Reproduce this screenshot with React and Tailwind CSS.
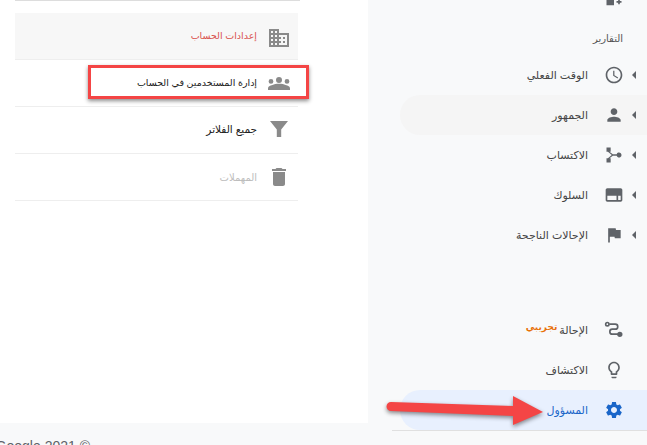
import React from 'react';

const ICONS = {
  domain: 'M12 7V3H2v18h20V7H12zM6 19H4v-2h2v2zm0-4H4v-2h2v2zm0-4H4V9h2v2zm0-4H4V5h2v2zm4 12H8v-2h2v2zm0-4H8v-2h2v2zm0-4H8V9h2v2zm0-4H8V5h2v2zm10 12h-8v-2h2v-2h-2v-2h2v-2h-2V9h8v10zm-2-8h-2v2h2v-2zm0 4h-2v2h2v-2z',
  group: 'M4 8a2.4 2.4 0 1 1 0 4.8A2.4 2.4 0 0 1 4 8zM12 6a3 3 0 1 1 0 6 3 3 0 0 1 0-6zM20 8a2.4 2.4 0 1 1 0 4.8A2.4 2.4 0 0 1 20 8zM1 19v-1.6C1 15.5 2.800 14.400 5.500 14c1.500-.8 3.800-1.300 6.500-1.300s5 .5 6.500 1.300c2.700.4 4.500 1.500 4.500 3.400V19z',
  filter: 'M3 4h18l-6.800 8.500V20H9.800v-7.500z',
  trash: 'M6 19c0 1.1.9 2 2 2h8c1.1 0 2-.9 2-2V7H6v12zM19 4h-3.500l-1-1h-5l-1 1H5v2h14V4z',
  clock: 'M11.990 2C6.470 2 2 6.480 2 12s4.470 10 9.990 10C17.520 22 22 17.520 22 12S17.520 2 11.990 2zM12 20c-4.420 0-8-3.580-8-8s3.580-8 8-8 8 3.580 8 8-3.580 8-8 8zm.5-13H11v6l5.250 3.150.75-1.230-4.500-2.670z',
  person: 'M12 12c2.210 0 4-1.790 4-4s-1.790-4-4-4-4 1.790-4 4 1.790 4 4 4zm0 2c-2.670 0-8 1.340-8 4v2h16v-2c0-2.660-5.330-4-8-4z',
  acquisition: 'M3 3h5v5H6.600l4 3.200A3 3 0 0 1 12 11h3.200a3 3 0 1 1 0 2H12a3 3 0 0 1-1.400-.2l-4 3.200H8v5H3v-5h1.700l4.600-4-4.600-4H3z',
  behavior: 'M20 4H4c-1.100 0-2 .9-2 2v12c0 1.100.9 2 2 2h16c1.100 0 2-.9 2-2V6c0-1.100-.9-2-2-2zM4 18v-5h11v5H4zm16 0h-3v-5h3v5z',
  flag: 'M14.400 6L14 4H5v17h2v-7h5.600l.4 2h7V6z',
  route: 'M4 2a3 3 0 1 1 0 6 3 3 0 0 1 0-6zm0 2a1 1 0 1 0 0 2 1 1 0 0 0 0-2zM7 4h6.500a4 4 0 0 1 0 8H10a2 2 0 0 0 0 4h6v2h-6a4 4 0 0 1 0-8h3.500a2 2 0 0 0 0-4H7zM19 14a3.200 3.200 0 1 1 0 6.400 3.200 3.200 0 0 1 0-6.400z',
  bulb: 'M9 21c0 .55.45 1 1 1h4c.55 0 1-.45 1-1v-1H9v1zm3-19C8.140 2 5 5.140 5 9c0 2.380 1.190 4.470 3 5.740V17c0 .55.45 1 1 1h6c.55 0 1-.45 1-1v-2.260c1.810-1.270 3-3.360 3-5.740 0-3.860-3.140-7-7-7zm2.850 11.100l-.85.6V16h-4v-2.300l-.85-.6C7.800 12.160 7 10.630 7 9c0-2.760 2.240-5 5-5s5 2.240 5 5c0 1.630-.8 3.160-2.150 4.100z',
  gear: 'M19.140 12.940c.04-.3.06-.61.06-.94 0-.32-.02-.64-.07-.94l2.030-1.580c.18-.14.23-.41.12-.61l-1.920-3.320c-.12-.22-.37-.29-.59-.22l-2.390.96c-.5-.38-1.030-.7-1.620-.94l-.36-2.540c-.04-.24-.24-.41-.48-.41h-3.840c-.24 0-.43.17-.47.41l-.36 2.540c-.59.24-1.130.57-1.620.94l-2.390-.96c-.22-.08-.47 0-.59.22L2.740 8.870c-.12.21-.08.47.12.61l2.030 1.580c-.05.3-.09.63-.09.94s.02.64.07.94l-2.030 1.580c-.18.14-.23.41-.12.61l1.920 3.320c.12.22.37.29.59.22l2.390-.96c.5.38 1.030.7 1.620.94l.36 2.540c.05.24.24.41.48.41h3.840c.24 0 .44-.17.47-.41l.36-2.540c.59-.24 1.130-.56 1.620-.94l2.390.96c.22.08.47 0 .59-.22l1.920-3.320c.12-.22.07-.47-.12-.61l-2.010-1.580zM12 15.600c-1.980 0-3.600-1.620-3.600-3.600s1.620-3.600 3.600-3.600 3.600 1.620 3.600 3.600-1.620 3.600-3.600 3.600z',
  addBox: 'M3 3h9v20H3zM17 16h2v2h2v2h-2v2h-2v-2h-2v-2h2z',
};

function Icon({ name, className }) {
  return (
    <svg viewBox="0 0 24 24" className={className} fill="currentColor" aria-hidden="true">
      <path d={ICONS[name]} />
    </svg>
  );
}

const accountRows = [
  { label: 'إعدادات الحساب', icon: 'domain', text: 'text-[9.5px] text-[#d9534f]', bg: 'bg-[#f7f7f7]', iconClass: 'mt-[4px]' },
  { label: 'إدارة المستخدمين في الحساب', icon: 'group', text: 'text-[9.5px] text-[#222222]', bg: '', iconClass: '' },
  { label: 'جميع الفلاتر', icon: 'filter', text: 'text-[10.5px] text-[#222222]', bg: '', iconClass: '-mt-[2px]' },
  { label: 'المهملات', icon: 'trash', text: 'text-[10px] text-[#bdbdbd]', bg: '', iconClass: '' },
];

const reportRows = [
  { label: 'الوقت الفعلي', icon: 'clock' },
  { label: 'الجمهور', icon: 'person', bg: 'bg-[#f5f5f5]' },
  { label: 'الاكتساب', icon: 'acquisition' },
  { label: 'السلوك', icon: 'behavior' },
  { label: 'الإحالات الناجحة', icon: 'flag' },
];

function NavRow({ label, icon, caret = true, bg = '', color = 'text-[#5f6368]', textColor = 'text-[#444444]', children }) {
  return (
    <div className={`ml-[32px] flex h-10 items-center rounded-l-[20px] pr-[11px] ${bg}`}>
      <span className={`h-0 w-0 border-y-[4px] border-r-[4px] border-y-transparent ${caret ? 'border-r-[#5f6368]' : 'border-r-transparent'}`} />
      <Icon name={icon} className={`mr-2 h-5 w-5 ${color}`} />
      <span className={`mr-4 text-[11px] whitespace-nowrap ${textColor}`}>{label}</span>
      {children}
    </div>
  );
}

export default function App() {
  return (
    <div className="relative flex h-[445px] w-[647px] overflow-hidden bg-white font-['Liberation_Sans','DejaVu_Sans',sans-serif]">
      <div className="flex w-[368px] flex-col">
        <main className="h-[423px] w-[298px] pl-[15px]">
          <div className="h-px w-[285px] bg-[#dddddd]" />
          <div className="mt-3">
            {accountRows.map((row) => (
              <div key={row.icon} dir="rtl" className={`flex h-[47px] items-center border-b border-[#eeeeee] pr-[7px] ${row.bg}`}>
                <Icon name={row.icon} className={`h-6 w-6 text-[#8a8a8a] ${row.iconClass}`} />
                <span className={`mr-[10px] whitespace-nowrap ${row.text}`}>{row.label}</span>
              </div>
            ))}
          </div>
        </main>
        <footer dir="rtl" className="flex h-[22px] items-start overflow-hidden bg-[#f8f9fa] pt-[13px] pr-[278px]">
          <span className="text-[14px] font-medium whitespace-nowrap text-[#5f6368]">© 2021 Google</span>
        </footer>
      </div>

      <aside dir="rtl" className="h-[445px] w-[279px] bg-[#f8f9fa]">
        <div className="-mt-[24px] flex h-[470px] flex-col">
          <NavRow label="المستكشف" icon="addBox" />
          <div className="flex h-[39px] items-end pr-[24px] pb-[9px] text-[10px] text-[#555555]">التقارير</div>
          {reportRows.map((row) => (
            <NavRow key={row.icon} label={row.label} icon={row.icon} bg={row.bg} />
          ))}
          <div className="h-[55px]" />
          <NavRow label="الإحالة" icon="route" caret={false}>
            <span className="mr-[2px] -translate-y-[2px] text-[9px] font-bold text-[#e8710a]">تجريبي</span>
          </NavRow>
          <NavRow label="الاكتشاف" icon="bulb" caret={false} />
          <NavRow label="المسؤول" icon="gear" caret={false} bg="bg-[#e8f0fe]" color="text-[#1a66c9]" textColor="text-[#1a66c9]" />
          <div className="ml-[24px] h-px bg-[#e0e0e0]" />
        </div>
      </aside>

      {/* callout over the users row */}
      <div className="absolute top-[65px] left-[88px] h-[34px] w-[221px] border-[3px] border-[#f44545] shadow-[0_2px_4px_rgba(0,0,0,0.45)]" />

      {/* arrow over the admin row */}
      <svg className="absolute top-[390px] left-[382px] h-[40px] w-[165px] drop-shadow-[0_2px_2px_rgba(0,0,0,0.45)]" viewBox="0 0 165 40" aria-hidden="true">
        <path d="M9 12 L131 16 L131 6 L161 22 L131 35 L131 26 L9 21 A4.500 4.500 0 0 1 9 12 Z" fill="#f44545" />
      </svg>
    </div>
  );
}
